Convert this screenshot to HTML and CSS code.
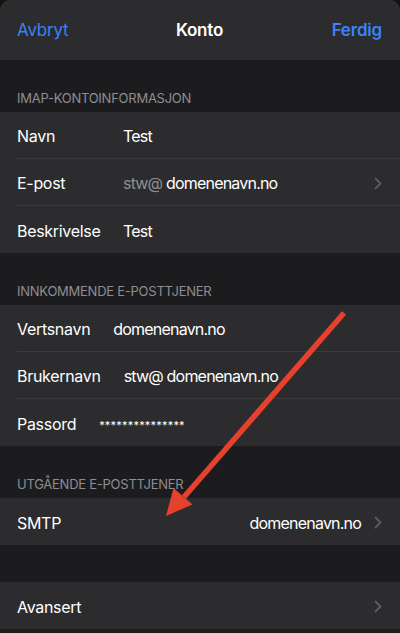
FILE: index.html
```html
<!DOCTYPE html>
<html lang="no">
<head>
<meta charset="utf-8">
<title>Konto</title>
<link rel="stylesheet" href="styles.css">
</head>
<body>
<div class="sheet">
  <header class="nav">
    <span class="nav-btn">Avbryt</span>
    <span class="nav-title">Konto</span>
    <span class="nav-btn nav-done">Ferdig</span>
  </header>

  <section class="section">
    <div class="section-header">IMAP-KONTOINFORMASJON</div>
    <div class="group">
      <div class="row"><div class="row-inner">
        <span class="label label-fixed">Navn</span><span class="value">Test</span>
      </div></div>
      <div class="row"><div class="row-inner">
        <span class="label label-fixed">E-post</span><span class="value"><span class="muted">stw@</span> domenenavn.no</span>
        <svg class="chev" viewBox="0 0 8 13" width="8" height="13"><path d="M1.5 1.5 L6.5 6.5 L1.5 11.5"/></svg>
      </div></div>
      <div class="row"><div class="row-inner">
        <span class="label label-fixed">Beskrivelse</span><span class="value">Test</span>
      </div></div>
    </div>
  </section>

  <section class="section">
    <div class="section-header">INNKOMMENDE E-POSTTJENER</div>
    <div class="group">
      <div class="row"><div class="row-inner gap">
        <span class="label">Vertsnavn</span><span class="value">domenenavn.no</span>
      </div></div>
      <div class="row"><div class="row-inner gap">
        <span class="label">Brukernavn</span><span class="value">stw@ domenenavn.no</span>
      </div></div>
      <div class="row"><div class="row-inner gap">
        <span class="label">Passord</span><span class="value stars">***************</span>
      </div></div>
    </div>
  </section>

  <section class="section">
    <div class="section-header">UTGÅENDE E-POSTTJENER</div>
    <div class="group">
      <div class="row"><div class="row-inner">
        <span class="label">SMTP</span><span class="value value-right">domenenavn.no</span>
        <svg class="chev" viewBox="0 0 8 13" width="8" height="13"><path d="M1.5 1.5 L6.5 6.5 L1.5 11.5"/></svg>
      </div></div>
    </div>
  </section>

  <section class="section section-plain">
    <div class="group">
      <div class="row"><div class="row-inner">
        <span class="label">Avansert</span><span class="value value-right"></span>
        <svg class="chev" viewBox="0 0 8 13" width="8" height="13"><path d="M1.5 1.5 L6.5 6.5 L1.5 11.5"/></svg>
      </div></div>
    </div>
  </section>

  <svg class="arrow" viewBox="0 0 400 633" width="400" height="633">
    <line x1="344" y1="313" x2="184" y2="497" stroke="#e5412d" stroke-width="5.5" stroke-linecap="butt"/>
    <polygon points="166,516 173.5,488 192.5,504.5" fill="#e5412d"/>
  </svg>
</div>
</body>
</html>
```

FILE: styles.css
```css
* { box-sizing: border-box; }

html, body {
  margin: 0;
  padding: 0;
  background: #121212;
}

body {
  font-family: Inter, "Noto Sans", "Liberation Sans", sans-serif;
  color: #ffffff;
  -webkit-font-smoothing: antialiased;
}

.sheet {
  position: relative;
  width: 400px;
  height: 633px;
  background: #1c1c1e;
  border-radius: 10px 10px 0 0;
  overflow: hidden;
}

.nav {
  height: 60px;
  background: #2c2c2e;
  display: grid;
  grid-template-columns: 1fr auto 1fr;
  align-items: center;
  padding: 0 18px 0 17px;
  font-size: 17px;
  letter-spacing: -0.2px;
}

.nav-btn { color: #3a82f6; }
.nav-done { justify-self: end; font-weight: 600; }
.nav-title { font-weight: 600; color: #ffffff; }

.section-header {
  padding: 30px 17px 6px;
  font-size: 13px;
  line-height: 16px;
  color: #8d8d92;
  letter-spacing: -0.25px;
}

.section-plain { padding-top: 37px; }

.group { background: #2c2c2e; }

.row {
  padding-left: 17px;
  height: 47px;
}

.row-inner {
  height: 100%;
  display: flex;
  align-items: center;
  padding: 2px 18px 0 0;
  border-bottom: 1px solid #3b3b3e;
  font-size: 16px;
  letter-spacing: -0.3px;
}

.row:last-child .row-inner { border-bottom: none; }

.row-inner.gap { gap: 23px; }

.label-fixed { width: 106px; flex: none; }

.value {
  flex: 1;
  letter-spacing: -0.8px;
}

.value-right { text-align: right; margin-right: 13px; }

.muted { color: #8e8e93; }

.stars {
  font-size: 11px;
  letter-spacing: 0.2px;
  padding-top: 3px;
}

.chev {
  flex: none;
  fill: none;
  stroke: #5b5b60;
  stroke-width: 1.8;
  stroke-linecap: round;
  stroke-linejoin: round;
}

.arrow {
  position: absolute;
  left: 0;
  top: 0;
  pointer-events: none;
}
```
